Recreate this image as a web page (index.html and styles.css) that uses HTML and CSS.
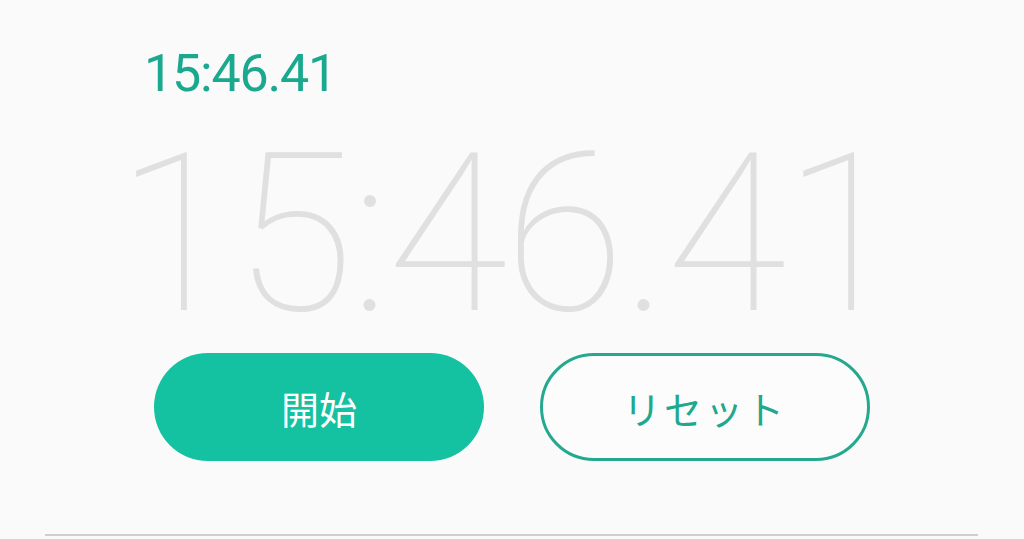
FILE: index.html
```html
<!DOCTYPE html>
<html lang="ja">
<head>
<meta charset="utf-8">
<link rel="stylesheet" href="styles.css">
</head>
<body>
<div class="screen">
  <div class="lap">15:46.41</div>
  <div class="main-time">15:46.41</div>
  <div class="actions">
    <button class="btn btn-start">開始</button>
    <button class="btn btn-reset">リセット</button>
  </div>
  <div class="divider"></div>
</div>
</body>
</html>
```
FILE: styles.css
```css
html, body {
  margin: 0;
  padding: 0;
  background: #fafafa;
}
.screen {
  width: 1024px;
  height: 539px;
  overflow: hidden;
  display: flex;
  flex-direction: column;
  font-family: Roboto, "Noto Sans CJK JP", sans-serif;
}
.lap {
  margin-top: 48px;
  padding-left: 144px;
  font-size: 52px;
  line-height: 1;
  font-weight: 400;
  color: #1aa88e;
  letter-spacing: -1.2px;
}
.main-time {
  margin-top: 25px;
  padding-left: 116px;
  font-size: 220px;
  line-height: 1;
  font-weight: 100;
  color: #e0e0e0;
  letter-spacing: -3px;
  white-space: nowrap;
}
.actions {
  margin-top: 8px;
  display: flex;
  justify-content: center;
  gap: 56px;
}
.btn {
  width: 330px;
  height: 108px;
  border-radius: 54px;
  box-sizing: border-box;
  font-family: "Noto Sans CJK JP", sans-serif;
  font-size: 38px;
  font-weight: 400;
  display: flex;
  align-items: center;
  justify-content: center;
  padding: 0;
}
.btn-start {
  background: #14c1a0;
  border: none;
  color: #ffffff;
}
.btn-reset {
  background: #fcfcfc;
  border: 3px solid #25a98e;
  color: #1fa88c;
  letter-spacing: 3px;
}
.divider {
  margin: 73px 46px 0 45px;
  height: 2px;
  background: #cfcfcf;
}
```
